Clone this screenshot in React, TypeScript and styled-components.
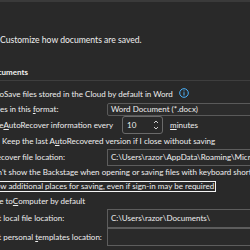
import React from 'react';
import styled, { createGlobalStyle } from 'styled-components';

const GlobalStyle = createGlobalStyle`
  html, body {
    margin: 0;
    padding: 0;
    background: #292929;
  }
  #root {
    width: 250px;
    height: 250px;
    overflow: hidden;
  }
`;

const Window = styled.div`
  width: 250px;
  height: 250px;
  overflow: hidden;
  box-sizing: border-box;
  border-top: 2px solid #3a3a3a;
  background: #292929;
  color: #efefef;
  font-family: Lato, 'Noto Sans', sans-serif;
  font-size: 8px;
`;

// the options pane is scrolled a little to the left, so labels start off-screen
const Pane = styled.div`
  display: flex;
  flex-direction: column;
  margin-left: -40px;
  width: 440px;
`;

const Intro = styled.div`
  display: flex;
  align-items: center;
  gap: 8px;
  height: 20px;
  margin-top: 28px;
  padding-left: 14px;
  font-size: 8.6px;
`;

const SectionTitle = styled.div`
  box-sizing: border-box;
  display: flex;
  align-items: center;
  height: 17px;
  margin-top: 14px;
  padding-left: 10px;
  font-weight: 700;
  border-bottom: 1px solid #3e3e3e;
`;

const Options = styled.div`
  display: flex;
  flex-direction: column;
  margin-top: 5px;
`;

type RowProps = {
  $h: number;
  $indent?: number;
};

const Row = styled.div<RowProps>`
  display: flex;
  align-items: center;
  height: ${(p) => p.$h}px;
  padding-left: ${(p) => p.$indent ?? 15}px;
  white-space: nowrap;
`;

const Check = styled.span<{ $on?: boolean }>`
  box-sizing: border-box;
  flex: none;
  width: 10px;
  height: 10px;
  border-radius: 2px;
  border: 1px solid ${(p) => (p.$on ? '#4cc2ff' : '#c8c8c8')};
  background: ${(p) => (p.$on ? '#4cc2ff' : 'transparent')};
`;

const Label = styled.span<{ $focus?: boolean }>`
  display: inline-flex;
  align-items: center;
  padding: 0 1px;
  border: 1px solid ${(p) => (p.$focus ? '#f4f4f4' : 'transparent')};
  line-height: 9px;
`;

const FieldLabel = styled.span`
  flex: none;
  width: 132px;
`;

const Key = styled.span`
  text-decoration: underline;
  text-underline-offset: 1px;
`;

const Select = styled.div`
  box-sizing: border-box;
  display: flex;
  align-items: center;
  width: 240px;
  height: 13px;
  padding-left: 3px;
  border: 1px solid #5a5a5a;
  border-radius: 2px;
  background: #2c2c2c;
`;

const TextBox = styled.div<{ $h: number }>`
  box-sizing: border-box;
  display: flex;
  align-items: center;
  width: 240px;
  height: ${(p) => p.$h}px;
  padding-left: 3px;
  border: 1px solid #5d5d5d;
  background: #2a2a2a;
`;

const Spin = styled.div`
  box-sizing: border-box;
  display: flex;
  align-items: center;
  justify-content: space-between;
  width: 41px;
  height: 18px;
  margin: 0 7px 0 7px;
  padding: 0 3px 0 4px;
  border: 1px solid #6a6a6a;
  border-radius: 3px;
`;

const InfoIcon = () => (
  <svg width="10" height="10" viewBox="0 0 10 10" style={{ marginLeft: 4, marginTop: -3 }}>
    <circle cx="5" cy="5" r="4.3" fill="none" stroke="#4cb4ff" strokeWidth="1" />
    <rect x="4.5" y="4.2" width="1" height="3.3" fill="#4cb4ff" />
    <rect x="4.5" y="2.4" width="1" height="1" fill="#4cb4ff" />
  </svg>
);

const SpinArrows = () => (
  <svg width="6" height="12" viewBox="0 0 6 12">
    <path d="M1 4 L3 2 L5 4" fill="none" stroke="#d0d0d0" strokeWidth="1" />
    <path d="M1 8 L3 10 L5 8" fill="none" stroke="#d0d0d0" strokeWidth="1" />
  </svg>
);

const SaveIcon = () => (
  <svg width="18" height="18" viewBox="0 0 18 18">
    <rect x="2" y="2" width="14" height="14" rx="1" fill="none" stroke="#c8c8c8" />
  </svg>
);

const App = () => {
  return (
    <>
      <GlobalStyle />
      <Window>
        <Pane>
          <Intro>
            <SaveIcon />
            Customize how documents are saved.
          </Intro>
          <SectionTitle>Save documents</SectionTitle>
          <Options>
            <Row $h={16}>
              <Check $on />
              <Label>AutoSave files stored in the Cloud by default in Word</Label>
              <InfoIcon />
            </Row>
            <Row $h={14}>
              <FieldLabel>
                Save files in this <Key>f</Key>ormat:
              </FieldLabel>
              <Select>Word Document (*.docx)</Select>
            </Row>
            <Row $h={18}>
              <Check $on />
              <Label>
                Save <Key>A</Key>utoRecover information every
              </Label>
              <Spin>
                10
                <SpinArrows />
              </Spin>
              <Key>m</Key>inutes
            </Row>
            <Row $h={14} $indent={30}>
              <Check $on />
              <Label>
                Keep the last A<Key>u</Key>toRecovered version if I close without saving
              </Label>
            </Row>
            <Row $h={18}>
              <FieldLabel>AutoRecover file location:</FieldLabel>
              <TextBox $h={17}>C:\Users\razor\AppData\Roaming\Microsoft\Word\</TextBox>
            </Row>
            <Row $h={13}>
              <Check />
              <Label>Don't show the Backstage when opening or saving files with keyboard shortcuts</Label>
            </Row>
            <Row $h={15}>
              <Check />
              <Label $focus>Show additional places for saving, even if sign-in may be required</Label>
            </Row>
            <Row $h={14}>
              <Check />
              <Label>
                Save to <Key>C</Key>omputer by default
              </Label>
            </Row>
            <Row $h={20}>
              <FieldLabel>
                Default local f<Key>i</Key>le location:
              </FieldLabel>
              <TextBox $h={19}>C:\Users\razor\Documents\</TextBox>
            </Row>
            <Row $h={18}>
              <FieldLabel>
                Default personal <Key>t</Key>emplates location:
              </FieldLabel>
              <TextBox $h={18} />
            </Row>
          </Options>
        </Pane>
      </Window>
    </>
  );
};

export default App;
